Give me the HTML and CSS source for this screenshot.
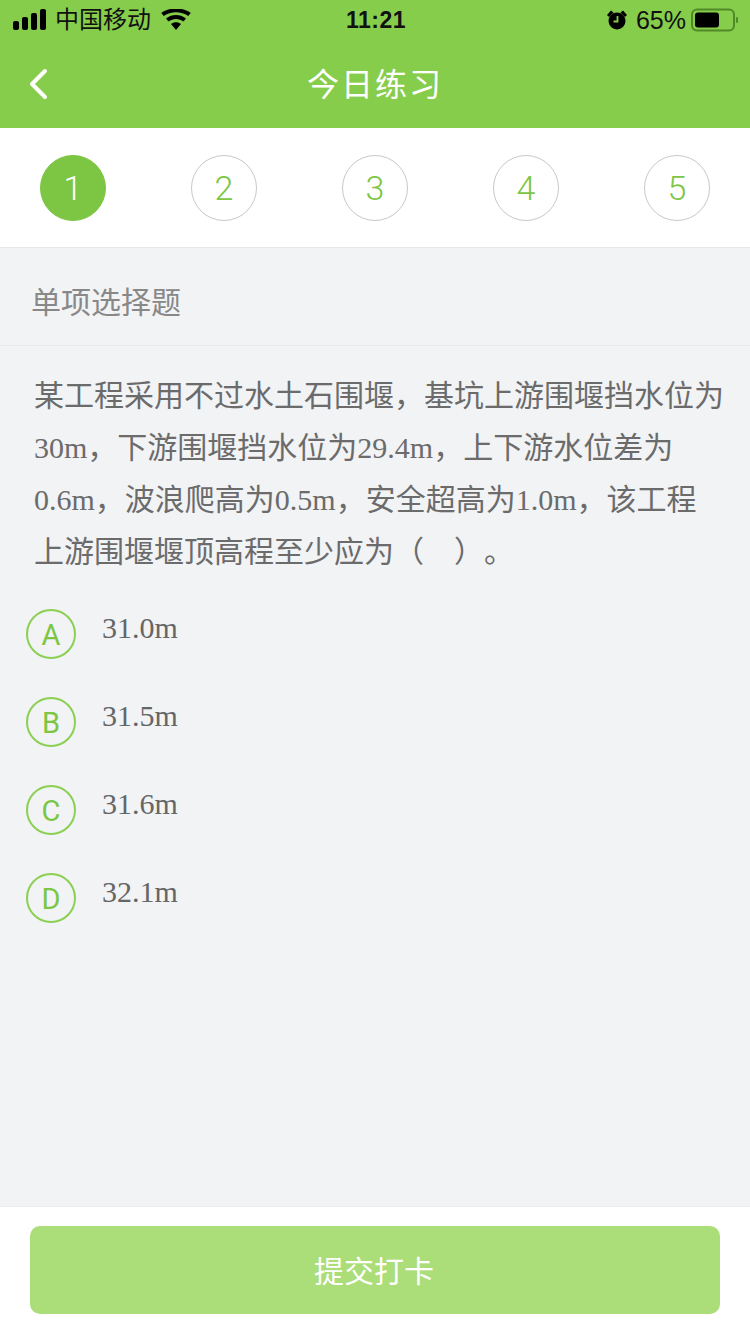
FILE: index.html
```html
<!DOCTYPE html>
<html lang="zh-CN">
<head>
    <meta charset="UTF-8">
    <meta name="viewport" content="width=device-width, initial-scale=1.0">
    <title>今日练习</title>
    <link rel="stylesheet" href="styles.css">
</head>
<body>
<div class="page">
    <header class="top">
        <div class="status">
            <div class="status-left">
                <svg class="signal" width="35" height="22" viewBox="0 0 35 22">
                    <rect x="0" y="12" width="6" height="9" rx="2"/>
                    <rect x="9" y="8" width="6" height="13" rx="2"/>
                    <rect x="18" y="4" width="6" height="17" rx="2"/>
                    <rect x="27" y="0" width="6" height="21" rx="2"/>
                </svg>
                <span class="carrier">中国移动</span>
                <svg class="wifi" width="30" height="22" viewBox="0 0 30 22">
                    <path d="M15 21l-5-6c3-2.400 7-2.400 10 0z"/>
                    <path d="M7.500 12.500l-2.500-3c6-4.600 14-4.600 20 0l-2.500 3c-4.500-3.400-10.500-3.400-15 0z"/>
                    <path d="M2.800 7l-2.600-3c8.500-6 21.100-6 29.600 0l-2.600 3c-7.200-5-17.200-5-24.400 0z"/>
                </svg>
            </div>
            <div class="status-time">11:21</div>
            <div class="status-right">
                <svg class="alarm" width="22" height="22" viewBox="0 0 22 22">
                    <circle cx="11" cy="12" r="8.500"/>
                    <path d="M1 6l4-4.500 2.500 2-4.500 4.500zM21 6l-4-4.500-2.500 2 4.500 4.500z"/>
                    <path class="alarm-hand" d="M11.500 7v5.500h-4"/>
                </svg>
                <span class="percent">65%</span>
                <svg class="battery" width="48" height="24" viewBox="0 0 48 24">
                    <rect class="battery-case" x="1" y="1.500" width="42" height="21" rx="5"/>
                    <rect x="4" y="4.500" width="24" height="15" rx="3"/>
                    <rect class="battery-tip" x="45" y="9" width="2" height="6" rx="1"/>
                </svg>
            </div>
        </div>
        <div class="nav">
            <svg class="back" width="20" height="34" viewBox="0 0 20 34">
                <path d="M16 4L3 17l13 13"/>
            </svg>
            <h1>今日练习</h1>
        </div>
    </header>

    <div class="steps">
        <div class="step step-on">1</div>
        <div class="step">2</div>
        <div class="step">3</div>
        <div class="step">4</div>
        <div class="step">5</div>
    </div>

    <main class="content">
        <div class="qtype">单项选择题</div>
        <p class="question">某工程采用不过水土石围堰，基坑上游围堰挡水位为30m，下游围堰挡水位为29.4m，上下游水位差为0.6m，波浪爬高为0.5m，安全超高为1.0m，该工程上游围堰堰顶高程至少应为（&nbsp;&nbsp;&nbsp;&nbsp;）。</p>
        <ul class="options">
            <li class="option"><span class="letter">A</span><span class="answer">31.0m</span></li>
            <li class="option"><span class="letter">B</span><span class="answer">31.5m</span></li>
            <li class="option"><span class="letter">C</span><span class="answer">31.6m</span></li>
            <li class="option"><span class="letter">D</span><span class="answer">32.1m</span></li>
        </ul>
    </main>

    <footer class="bottom">
        <button class="submit">提交打卡</button>
    </footer>
</div>
</body>
</html>
```

FILE: styles.css
```css
* {
    box-sizing: border-box;
}

body {
    margin: 0;
    font-family: "Liberation Sans", "Noto Sans CJK SC", sans-serif;
    background-color: #f2f3f5;
    color: #666;
}

.page {
    display: flex;
    flex-direction: column;
    height: 1334px;
    overflow: hidden;
}

/* header */
.top {
    height: 128px;
    background-color: #87cd4c;
    flex-shrink: 0;
}

.status {
    display: grid;
    grid-template-columns: 1fr auto 1fr;
    align-items: center;
    height: 40px;
    padding: 0 11px 0 13px;
    color: #111;
}

.status-left,
.status-right {
    display: flex;
    align-items: center;
}

.status-right {
    justify-content: flex-end;
}

.status svg {
    fill: #000;
}

.carrier {
    margin-left: 7px;
    font-size: 24px;
    line-height: 30px;
}

.wifi {
    margin-left: 10px;
}

.status-time {
    font-size: 23px;
    font-weight: bold;
    letter-spacing: 0.5px;
}

.percent {
    margin-left: 8px;
    font-size: 25px;
}

.battery {
    margin-left: 5px;
}

.status svg .battery-case {
    fill: none;
    stroke: #4f8a26;
    stroke-width: 2;
}

.status svg .battery-tip {
    fill: #4f8a26;
}

.status svg .alarm-hand {
    fill: none;
    stroke: #87cd4c;
    stroke-width: 1.800;
}

.nav {
    position: relative;
    display: flex;
    align-items: center;
    justify-content: center;
    height: 88px;
    padding-bottom: 4px;
}

.nav h1 {
    margin: 0;
    font-size: 32px;
    font-weight: normal;
    letter-spacing: 2px;
    color: #fff;
}

.back {
    position: absolute;
    left: 29px;
    top: 27px;
    fill: none;
    stroke: #fff;
    stroke-width: 4;
    stroke-linecap: round;
    stroke-linejoin: round;
}

/* number strip */
.steps {
    display: flex;
    justify-content: space-between;
    align-items: center;
    flex-shrink: 0;
    height: 120px;
    padding: 0 40px;
    background-color: #fff;
    border-bottom: 1px solid #e8e8e8;
}

.step {
    display: flex;
    align-items: center;
    justify-content: center;
    width: 66px;
    height: 66px;
    border: 1px solid #c8c8c8;
    border-radius: 50%;
    font-family: Roboto, sans-serif;
    font-size: 34px;
    font-weight: 300;
    color: #7cc644;
}

.step-on {
    background-color: #7cc644;
    border-color: #7cc644;
    color: #fff;
}

/* question */
.content {
    flex: 1;
}

.qtype {
    height: 98px;
    padding: 36px 0 0 31px;
    font-size: 30px;
    line-height: 38px;
    color: #888;
    border-bottom: 1px solid #e9eaec;
}

.question {
    margin: 0;
    padding: 24px 26px 0 34px;
    font-family: "Liberation Serif", "Noto Sans CJK SC", serif;
    font-size: 30px;
    line-height: 52px;
    color: #6b6b6b;
    text-spacing-trim: space-all;
}

.options {
    list-style: none;
    margin: 0;
    padding: 30px 0 0 26px;
}

.option {
    display: flex;
    align-items: flex-start;
    height: 88px;
}

.letter {
    display: flex;
    align-items: center;
    justify-content: center;
    width: 50px;
    height: 50px;
    margin-top: 1px;
    padding-top: 2px;
    border: 2px solid #8bd053;
    border-radius: 50%;
    font-family: Roboto, sans-serif;
    font-size: 29px;
    font-weight: 400;
    color: #7cc644;
}

.answer {
    margin-left: 26px;
    font-family: "Liberation Serif", serif;
    font-size: 30px;
    line-height: 40px;
}

/* footer */
.bottom {
    flex-shrink: 0;
    height: 128px;
    padding: 19px 30px 0;
    background-color: #fff;
    border-top: 1px solid #ececec;
}

.submit {
    display: block;
    width: 100%;
    height: 88px;
    padding: 0 2px 3px 0;
    border: 0;
    border-radius: 10px;
    background-color: #abdd79;
    font-family: inherit;
    font-size: 30px;
    color: #fff;
}
```
